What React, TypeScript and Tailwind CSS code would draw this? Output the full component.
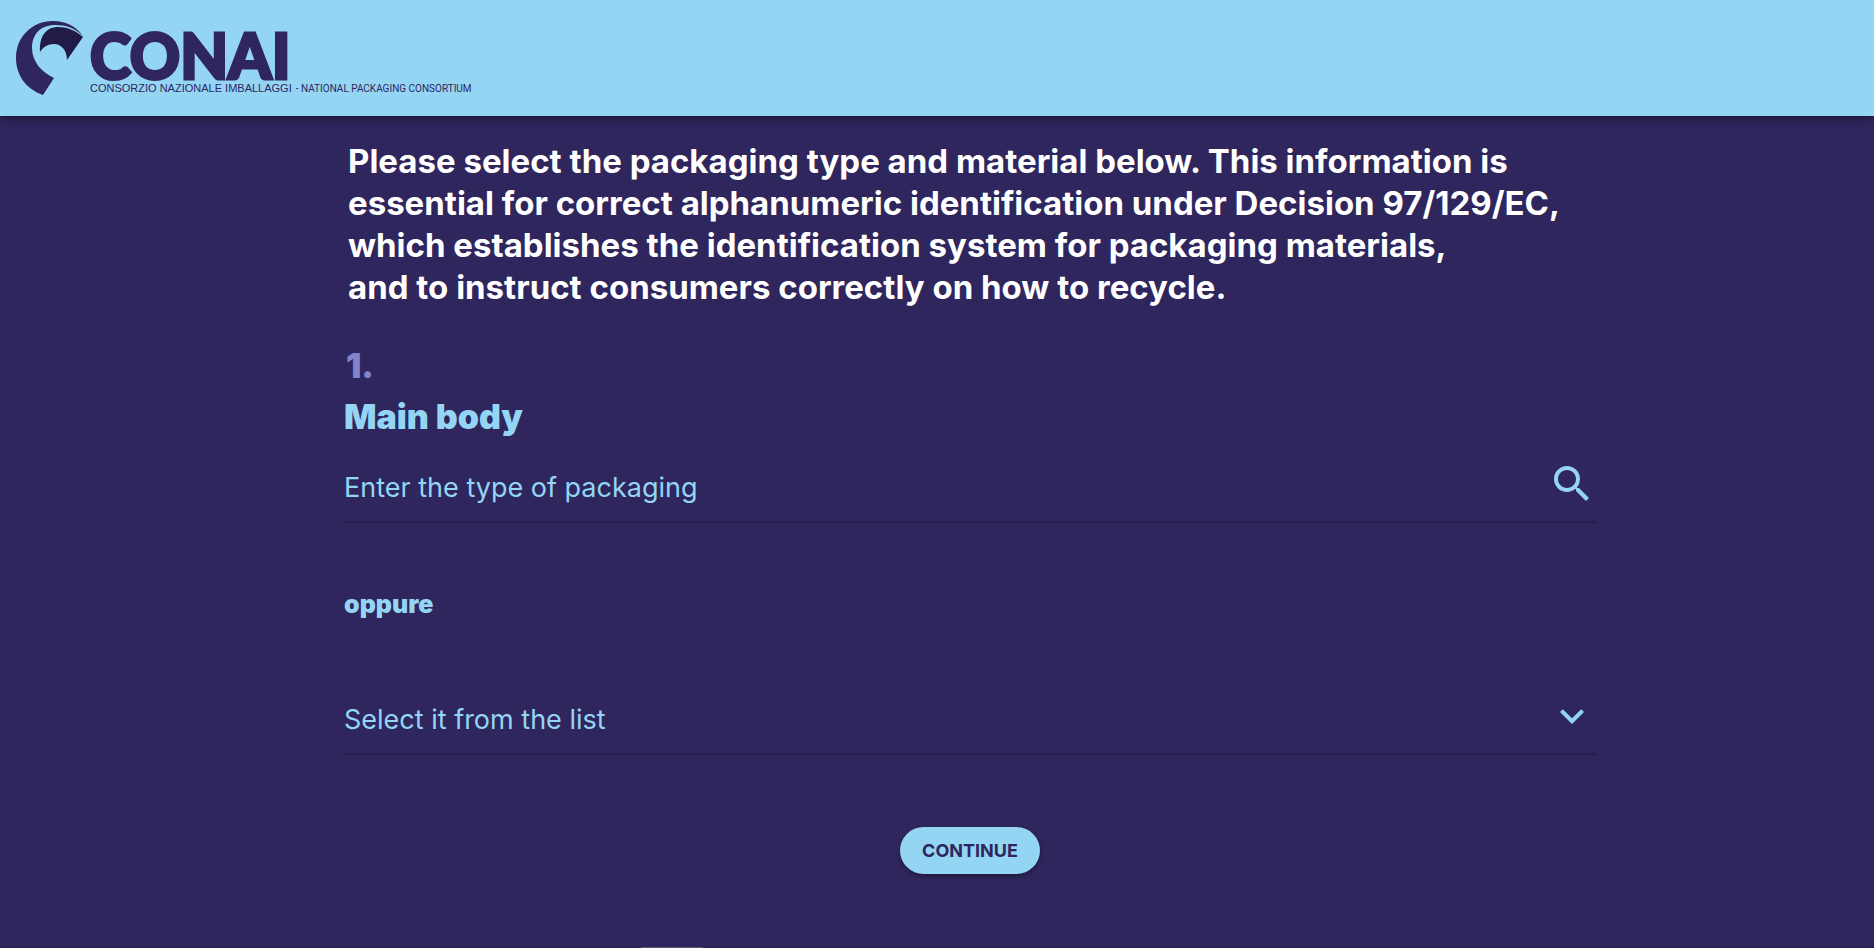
import { useState } from 'react'

const PACKAGING_TYPES = ['Bottle', 'Box', 'Can', 'Jar', 'Tray', 'Tube']

function Logo() {
  return (
    <a href="#" aria-label="CONAI" className="flex h-[76px] items-start gap-[6px] text-[#2f265d]">
      <svg viewBox="0 0 68 76" className="h-[76px] w-[68px]" aria-hidden="true">
        <path
          d="M67 16C60 6 49 1 37 1C16 1 0 17 0 38C0 55 10 69 27 75L38 58C25 52 16 41 16 28C16 14 25 5 39 5C50 5 59 8 67 16Z"
          fill="currentColor"
        />
        <path
          d="M67 17C59 10 51 7 42 7C31 7 23 15 24 32C27 27 32 24 38 24C45 24 51 30 51 40Z"
          fill="#221b47"
        />
      </svg>
      <div className="flex flex-col pt-[9px]">
        <span className="font-['Lato',sans-serif] text-[62px] leading-[53px] font-black [-webkit-text-stroke:3px]">
          CONAI
        </span>
        <span className="font-['Liberation_Sans',sans-serif] text-[11px] leading-[12px] whitespace-nowrap">
          CONSORZIO NAZIONALE IMBALLAGGI
        </span>
      </div>
    </a>
  )
}

function Header() {
  return (
    <header className="flex h-[116px] items-center bg-[#94d5f4] px-4 text-[#2f265d] shadow-[0_2px_8px_rgba(0,0,0,0.5)]">
      <div className="flex items-end gap-1">
        <Logo />
        <span className="font-['Roboto',sans-serif] text-[10px] leading-[14px]">- NATIONAL PACKAGING CONSORTIUM</span>
      </div>
    </header>
  )
}

export default function App() {
  const [query, setQuery] = useState('')
  const [type, setType] = useState('')

  return (
    <div className="flex min-h-screen flex-col bg-[#2f265d] font-['Inter',sans-serif]">
      <Header />

      <main className="flex-1 pl-[66px] text-[#94d5f4]">
        <form className="mx-auto flex max-w-[1252px] flex-col" onSubmit={(e) => e.preventDefault()}>
          <h1 className="mt-6 pl-1 text-[33px] leading-[42px] font-bold text-white">
            Please select the packaging type and material below. This information is
            <br />
            essential for correct alphanumeric identification under Decision 97/129/EC,
            <br />
            which establishes the identification system for packaging materials,
            <br />
            and to instruct consumers correctly on how to recycle.
          </h1>

          <p className="mt-9 pl-0.5 text-[34px] leading-[44px] font-black text-[#8085cb]">1.</p>
          <h2 className="mt-1 text-[34px] leading-[50px] font-black">Main body</h2>

          {/* free text search */}
          <div className="mt-1 flex h-[77px] items-center border-b-2 border-[#261e4c]">
            <input
              type="text"
              aria-label="Enter the type of packaging"
              placeholder="Enter the type of packaging"
              value={query}
              onChange={(e) => setQuery(e.target.value)}
              className="min-w-0 flex-1 bg-transparent pt-2.5 text-[27px] placeholder:text-[#94d5f4] focus:outline-none"
            />
            <button type="submit" aria-label="Search">
              <svg viewBox="0 0 24 24" className="size-12" fill="currentColor" aria-hidden="true">
                <path d="M15.5 14h-.79l-.28-.27A6.471 6.471 0 0 0 16 9.5 6.5 6.5 0 1 0 9.5 16c1.61 0 3.09-.59 4.23-1.57l.27.28v.79l5 4.99L20.49 19l-4.99-5zm-6 0C7.01 14 5 11.99 5 9.5S7.01 5 9.5 5 14 7.01 14 9.5 11.99 14 9.5 14z" />
              </svg>
            </button>
          </div>

          <p className="mt-16 text-[25px] leading-[34px] font-black">oppure</p>

          {/* pick from list */}
          <div className="mt-[57px] flex h-[77px] items-center border-b-2 border-[#261e4c]">
            <select
              aria-label="Select it from the list"
              value={type}
              onChange={(e) => setType(e.target.value)}
              className="min-w-0 flex-1 appearance-none bg-transparent pt-2.5 text-[27px] focus:outline-none"
            >
              <option value="">Select it from the list</option>
              {PACKAGING_TYPES.map((name) => (
                <option key={name} value={name}>
                  {name}
                </option>
              ))}
            </select>
            <svg viewBox="0 0 24 24" className="pointer-events-none size-12" fill="currentColor" aria-hidden="true">
              <path d="M7.41 8.59 12 13.17l4.59-4.58L18 10l-6 6-6-6 1.41-1.41z" />
            </svg>
          </div>

          <button
            type="submit"
            className="mt-[72px] h-[47px] self-center rounded-full bg-[#94d5f4] px-[22px] text-[18px] font-bold text-[#2f265d] shadow-[0_2px_5px_rgba(0,0,0,0.4)]"
          >
            CONTINUE
          </button>
        </form>
      </main>

      <footer className="h-px bg-[#1f2544]">
        <div className="ml-[641px] h-px w-[62px] bg-[#555a70]" />
      </footer>
    </div>
  )
}
